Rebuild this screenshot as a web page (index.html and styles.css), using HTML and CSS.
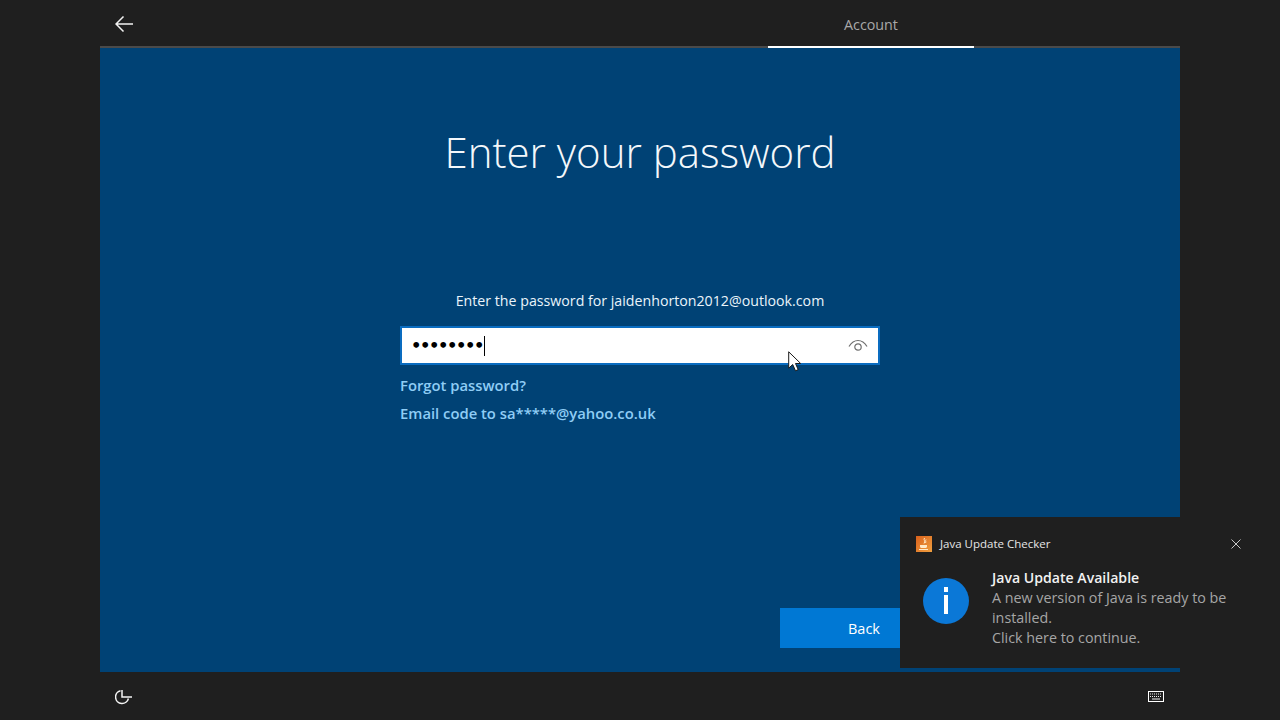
FILE: index.html
```html
<!DOCTYPE html>
<html lang="en">
<head>
    <meta charset="UTF-8">
    <title>Enter your password</title>
    <link rel="stylesheet" href="styles.css">
</head>
<body>
    <!-- Top bar -->
    <header class="topbar">
        <button class="back-arrow" aria-label="Back">
            <svg width="18" height="16" viewBox="0 0 18 16" fill="none" stroke="#f2f2f2" stroke-width="1.500">
                <path d="M18 8H1.500M8.500.5 1 8l7.500 7.500"/>
            </svg>
        </button>
        <div class="tab">Account</div>
    </header>

    <!-- Main panel -->
    <main class="panel">
        <h1>Enter your password</h1>
        <div class="form">
            <p class="prompt">Enter the password for jaidenhorton2012@outlook.com</p>
            <div class="password-box">
                <span class="dots">••••••••</span>
                <span class="caret"></span>
                <svg class="eye" width="20" height="14" viewBox="0 0 20 14" fill="none" stroke="#6f6f6f" stroke-width="1.200">
                    <path d="M1 7.500C3.500 3.400 6.500 1.500 10 1.500s6.500 1.900 9 6"/>
                    <circle cx="10" cy="8" r="3.200"/>
                </svg>
            </div>
            <a class="link" href="#">Forgot password?</a>
            <a class="link" href="#">Email code to sa*****@yahoo.co.uk</a>
        </div>
        <div class="actions">
            <button class="back-btn">Back</button>
        </div>
    </main>

    <!-- Bottom bar -->
    <footer class="bottombar">
        <svg class="clock" width="18" height="18" viewBox="0 0 18 18" fill="none" stroke="#f4f4f4" stroke-width="1.500">
            <path d="M5.500 2.700A6.500 6.500 0 1 0 13.400 10.500"/>
            <path d="M7 2v7h10"/>
        </svg>
        <svg class="keyboard" width="16" height="11" viewBox="0 0 16 11" fill="none">
            <rect x="0.500" y="0.500" width="15" height="10" fill="#1f1f1f" stroke="#ffffff"/>
            <path d="M2 3h12M2 5.500h12" stroke="#f0f0f0" stroke-dasharray="1 1"/>
            <path d="M4 8h8" stroke="#f0f0f0"/>
        </svg>
    </footer>

    <!-- Notification toast -->
    <aside class="toast">
        <div class="toast-head">
            <svg class="java-icon" width="16" height="16" viewBox="0 0 16 16">
                <defs>
                    <linearGradient id="java-bg" x1="0" y1="0" x2="1" y2="1">
                        <stop offset="0" stop-color="#d9611c"/>
                        <stop offset="1" stop-color="#f0a040"/>
                    </linearGradient>
                </defs>
                <rect width="16" height="16" fill="url(#java-bg)"/>
                <path d="M8.500 2C7 4 10 5 8 7.500M10 3.500C9 5 10.500 5.500 9.500 7" fill="none" stroke="#ffe9c8" stroke-width="1"/>
                <path d="M4 9h7v1.500c0 1-1 1.500-2 1.500H6c-1 0-2-.5-2-1.500z" fill="#ffe9c8"/>
                <path d="M3 13.500h9" stroke="#ffe9c8" stroke-width="1"/>
            </svg>
            <span class="app-name">Java Update Checker</span>
            <svg class="close" width="10" height="10" viewBox="0 0 10 10" stroke="#c8c8c8" stroke-width="1">
                <path d="M.5.500l9 9M9.500.500l-9 9"/>
            </svg>
        </div>
        <div class="toast-body">
            <div class="info-icon"><span class="info-dot"></span><span class="info-stem"></span></div>
            <div class="toast-text">
                <strong>Java Update Available</strong>
                <span>A new version of Java is ready to be installed.</span>
                <span>Click here to continue.</span>
            </div>
        </div>
    </aside>

    <!-- Mouse pointer -->
    <svg class="pointer" width="13" height="21" viewBox="0 0 13 21">
        <path d="M.7.800v16.400l4-3.700 2.800 6.300 2.700-1.200-2.700-6.100h5.200z" fill="#fff" stroke="#1a1a1a" stroke-width="1"/>
    </svg>
</body>
</html>
```

FILE: styles.css
```css
html, body {
    margin: 0;
    padding: 0;
}
body {
    width: 1280px;
    height: 720px;
    overflow: hidden;
    background: #1f1f1f;
    font-family: "Open Sans", "Noto Sans", sans-serif;
    color: #fff;
    display: flex;
    flex-direction: column;
    position: relative;
}
button {
    font-family: inherit;
    border: none;
    padding: 0;
}

.topbar {
    height: 48px;
    flex: none;
    margin: 0 100px;
    display: flex;
    align-items: flex-start;
    position: relative;
    box-shadow: inset 0 -2px 0 #4a4a4a;
}
.back-arrow {
    background: none;
    margin: 16px 0 0 15px;
    width: 18px;
    height: 16px;
    line-height: 0;
}
.tab {
    position: absolute;
    left: 668px;
    top: 0;
    width: 206px;
    height: 46px;
    border-bottom: 2px solid #fff;
    font-size: 14.300px;
    line-height: 50px;
    text-align: center;
    color: #a8a8a8;
}

.panel {
    flex: 1;
    margin: 0 100px;
    background: #004275;
    display: flex;
    flex-direction: column;
    align-items: center;
}
h1 {
    font-weight: 300;
    font-size: 42px;
    line-height: 60px;
    margin: 74px 0 0;
    color: #f4f8fb;
}
.form {
    width: 480px;
    margin-top: 107px;
    display: flex;
    flex-direction: column;
}
.prompt {
    margin: 0;
    font-size: 14.200px;
    line-height: 24px;
    text-align: center;
    color: #eaf4fb;
}
.password-box {
    height: 35px;
    margin-top: 13px;
    background: #fff;
    border: 2px solid #0a6cc0;
    display: flex;
    align-items: center;
    padding: 0 10px 0 9px;
}
.dots {
    font-family: "DejaVu Sans", sans-serif;
    font-size: 16.300px;
    font-weight: bold;
    line-height: 20px;
    margin-top: 1px;
    color: #000;
    letter-spacing: -1.400px;
}
.caret {
    width: 1px;
    height: 20px;
    background: #000;
    margin-left: 1px;
}
.eye {
    margin-left: auto;
}
.link {
    color: #8fcdf5;
    font-size: 14.800px;
    font-weight: 600;
    line-height: 28px;
    text-decoration: none;
}
.password-box + .link {
    margin-top: 6px;
}
.actions {
    margin-top: auto;
    margin-bottom: 24px;
    align-self: flex-end;
    width: 400px;
}
.back-btn {
    width: 168px;
    height: 40px;
    background: #0078d4;
    color: #fff;
    font-size: 14.500px;
}

.bottombar {
    height: 48px;
    flex: none;
    margin: 0 100px;
    display: flex;
    align-items: center;
    justify-content: space-between;
    padding: 2px 16px 0 15px;
    box-sizing: border-box;
}
.keyboard {
    margin-top: -2px;
}

.toast {
    position: absolute;
    left: 900px;
    top: 517px;
    width: 360px;
    height: 151px;
    box-sizing: border-box;
    background: #1f1f1f;
    padding: 18px 16px 0;
}
.toast-head {
    display: flex;
    align-items: center;
    height: 17px;
}
.app-name {
    margin-left: 8px;
    font-size: 11.500px;
    color: #e6e6e6;
}
.close {
    margin-left: auto;
    margin-right: 3px;
}
.toast-body {
    display: flex;
    margin-top: 16px;
    padding-left: 7px;
}
.info-icon {
    width: 46px;
    height: 46px;
    border-radius: 50%;
    background: #0b78d7;
    flex: none;
    margin-top: 10px;
    display: flex;
    flex-direction: column;
    align-items: center;
    padding-top: 9px;
    box-sizing: border-box;
}
.info-dot {
    width: 4px;
    height: 5px;
    background: #fff;
}
.info-stem {
    width: 4px;
    height: 19px;
    margin-top: 3px;
    background: #fff;
}
.toast-text {
    width: 250px;
    margin-left: 23px;
    font-size: 14.300px;
    line-height: 20px;
    color: #a6a6a6;
    display: flex;
    flex-direction: column;
}
.toast-text strong {
    color: #f2f2f2;
    font-size: 14.100px;
    font-weight: 600;
}

.pointer {
    position: absolute;
    left: 788px;
    top: 351px;
}
```
